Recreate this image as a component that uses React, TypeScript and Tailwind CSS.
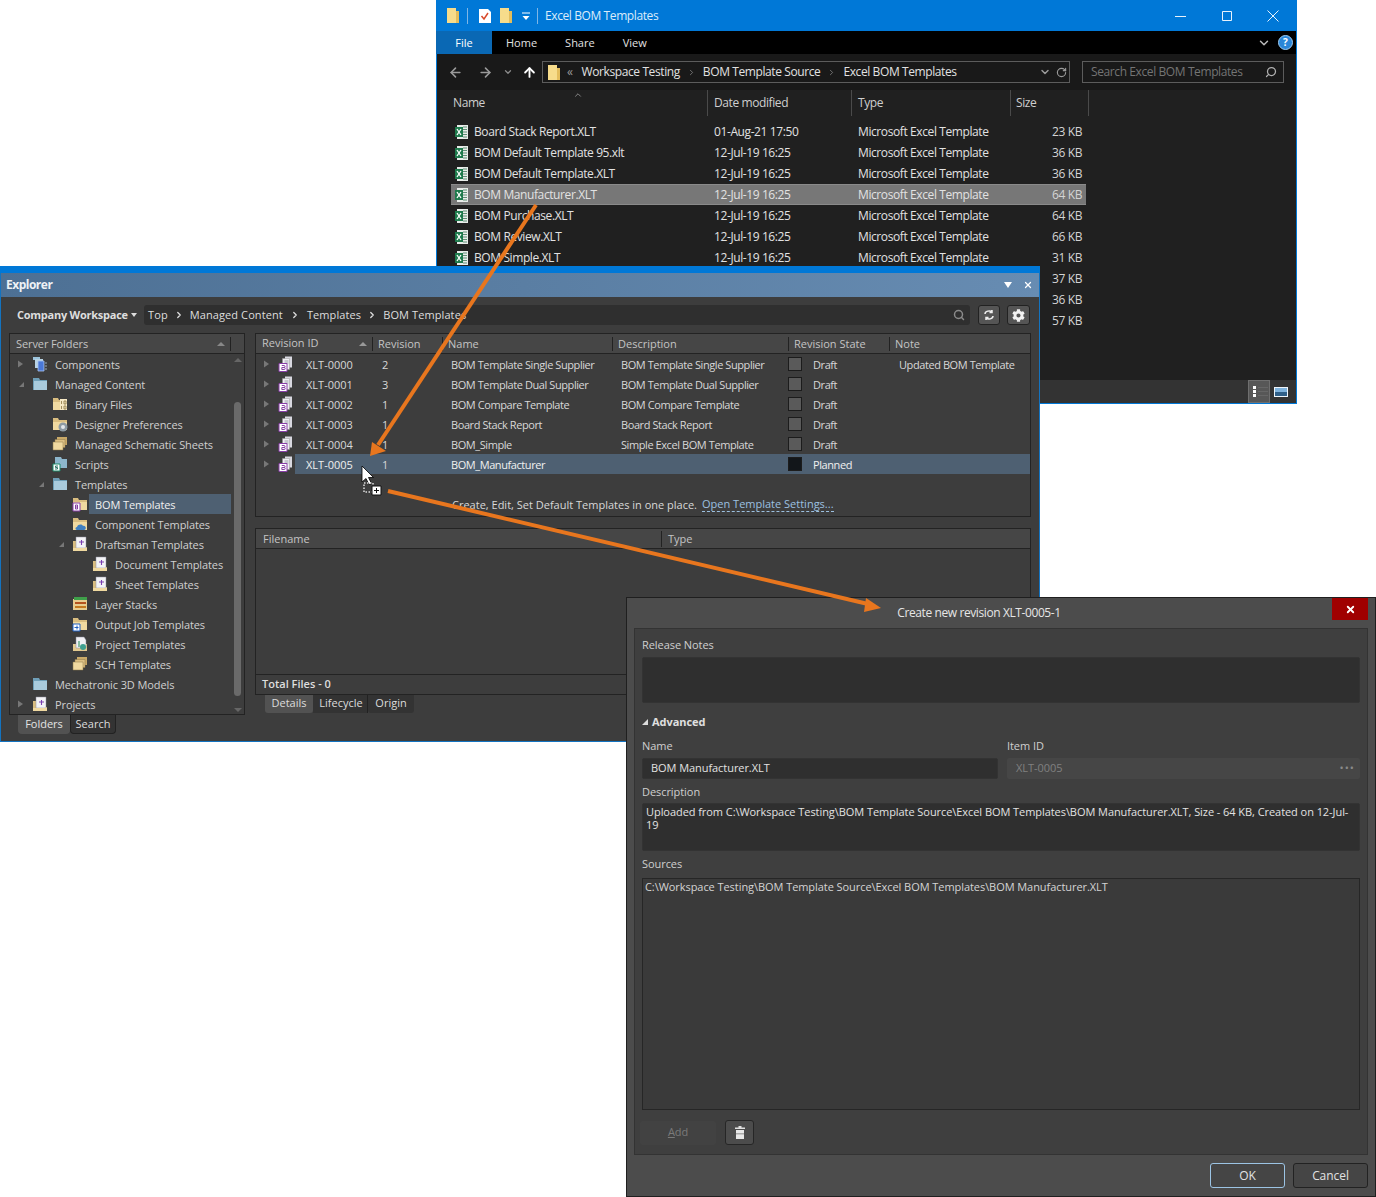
import { ChevronDown, ChevronRight, ArrowLeft, ArrowRight, ArrowUp, RotateCw, Search, X } from "lucide-react";
import { FaCog } from "react-icons/fa";

const files = [
  { name: "Board Stack Report.XLT", date: "01-Aug-21 17:50", size: "23 KB" },
  { name: "BOM Default Template 95.xlt", date: "12-Jul-19 16:25", size: "36 KB" },
  { name: "BOM Default Template.XLT", date: "12-Jul-19 16:25", size: "36 KB" },
  { name: "BOM Manufacturer.XLT", date: "12-Jul-19 16:25", size: "64 KB", selected: true },
  { name: "BOM Purchase.XLT", date: "12-Jul-19 16:25", size: "64 KB" },
  { name: "BOM Review.XLT", date: "12-Jul-19 16:25", size: "66 KB" },
  { name: "BOM Simple.XLT", date: "12-Jul-19 16:25", size: "31 KB" },
  { name: "", date: "", size: "37 KB" },
  { name: "", date: "", size: "36 KB" },
  { name: "", date: "", size: "57 KB" },
];

const tree = [
  { label: "Components", indent: "pl-[6px]", arrow: "right", icon: "components" },
  { label: "Managed Content", indent: "pl-[6px]", arrow: "down", icon: "blue" },
  { label: "Binary Files", indent: "pl-[26px]", icon: "binary" },
  { label: "Designer Preferences", indent: "pl-[26px]", icon: "gear" },
  { label: "Managed Schematic Sheets", indent: "pl-[26px]", icon: "stack" },
  { label: "Scripts", indent: "pl-[26px]", icon: "scripts" },
  { label: "Templates", indent: "pl-[26px]", arrow: "down", icon: "blue" },
  { label: "BOM Templates", indent: "pl-[46px]", icon: "bom", selected: true },
  { label: "Component Templates", indent: "pl-[46px]", icon: "cloud" },
  { label: "Draftsman Templates", indent: "pl-[46px]", arrow: "down", icon: "draft" },
  { label: "Document Templates", indent: "pl-[66px]", icon: "draft" },
  { label: "Sheet Templates", indent: "pl-[66px]", icon: "draft" },
  { label: "Layer Stacks", indent: "pl-[46px]", icon: "layer" },
  { label: "Output Job Templates", indent: "pl-[46px]", icon: "output" },
  { label: "Project Templates", indent: "pl-[46px]", icon: "project" },
  { label: "SCH Templates", indent: "pl-[46px]", icon: "stack" },
  { label: "Mechatronic 3D Models", indent: "pl-[6px]", icon: "blue" },
  { label: "Projects", indent: "pl-[6px]", arrow: "right", icon: "draft" },
];

const revisions = [
  { id: "XLT-0000", rev: "2", name: "BOM Template Single Supplier", desc: "BOM Template Single Supplier", state: "Draft", note: "Updated BOM Template" },
  { id: "XLT-0001", rev: "3", name: "BOM Template Dual Supplier", desc: "BOM Template Dual Supplier", state: "Draft", note: "" },
  { id: "XLT-0002", rev: "1", name: "BOM Compare Template", desc: "BOM Compare Template", state: "Draft", note: "" },
  { id: "XLT-0003", rev: "1", name: "Board Stack Report", desc: "Board Stack Report", state: "Draft", note: "" },
  { id: "XLT-0004", rev: "1", name: "BOM_Simple", desc: "Simple Excel BOM Template", state: "Draft", note: "" },
  { id: "XLT-0005", rev: "1", name: "BOM_Manufacturer", desc: "", state: "Planned", note: "", selected: true },
];

function ExcelIcon() {
  return (
    <svg width="16" height="16" viewBox="0 0 16 16" className="shrink-0">
      <path d="M3 1h11v14H3z" fill="#e8ece9" />
      <path d="M9 3h4M9 5.500h4M9 8h4M9 10.500h4M9 13h4" stroke="#5f8f76" strokeWidth="1" />
      <path d="M1 3h8v10H1z" fill="#1e7a4c" />
      <path d="M3 5l4 6M7 5l-4 6" stroke="#fff" strokeWidth="1.300" />
    </svg>
  );
}

function YellowFolder() {
  return (
    <svg width="14" height="17" viewBox="0 0 14 17" className="shrink-0">
      <path d="M1 1h9v15H1z" fill="#f7dc8b" />
      <path d="M10 4h3v12h-3z" fill="#e4bd5c" />
    </svg>
  );
}

function Tri({ dir }: { dir?: string }) {
  if (dir === "right") {
    return (
      <svg width="16" height="10" viewBox="-1 0 16 10" className="shrink-0">
        <path d="M1 1.500l5 3.500-5 3.500z" fill="#777" />
      </svg>
    );
  }
  if (dir === "down") {
    return (
      <svg width="16" height="10" viewBox="-1 0 16 10" className="shrink-0">
        <path d="M2 8l5-5v5z" fill="#777" />
      </svg>
    );
  }
  return <span className="w-4 shrink-0" />;
}

function TanFolder({ children }: { children?: React.ReactNode }) {
  return (
    <svg width="16" height="16" viewBox="0 0 16 16" className="shrink-0">
      <path d="M1 2h5l1 2h8v10H1z" fill="#d9bd80" />
      <path d="M1 6h14v8H1z" fill="#f0d9a0" />
      {children}
    </svg>
  );
}

function TreeIcon({ kind }: { kind: string }) {
  switch (kind) {
    case "components":
      return (
        <svg width="16" height="16" viewBox="0 0 16 16" className="shrink-0">
          <path d="M1 1h7v3H1z" fill="#9cc4dc" />
          <path d="M3 3h8v9H3z" fill="#b8d3e4" />
          <path d="M6 5h6v10H6z" fill="#4a78d8" stroke="#a8c4f0" strokeWidth="0.800" />
          <path d="M13 7h2M13 10h2M13 13h2" stroke="#9ab" strokeWidth="1" />
        </svg>
      );
    case "blue":
      return (
        <svg width="16" height="16" viewBox="0 0 16 16" className="shrink-0">
          <path d="M1 2h6l1 2h7v10H1z" fill="#6f9fb8" />
          <path d="M2 5h13v9H2z" fill="#a9cbdd" />
        </svg>
      );
    case "binary":
      return (
        <TanFolder>
          <path d="M8 3h7v11H8z" fill="#f6e8c4" />
          <path d="M9.500 5v3M12 5h2v3h-2zM9.500 10v3M12 10h2v3h-2z" stroke="#8a7440" strokeWidth="0.800" fill="none" />
        </TanFolder>
      );
    case "gear":
      return (
        <TanFolder>
          <circle cx="11" cy="11" r="4.500" fill="#8d9aa3" />
          <circle cx="11" cy="11" r="2" fill="#e3e7ea" />
        </TanFolder>
      );
    case "stack":
      return (
        <svg width="16" height="16" viewBox="0 0 16 16" className="shrink-0">
          <path d="M5 1h10v8H5z" fill="#c9a968" />
          <path d="M3 3.500h10v8H3z" fill="#dcbf82" stroke="#8f7a4a" strokeWidth="0.500" />
          <path d="M1 6h10v8H1z" fill="#f0d9a0" stroke="#8f7a4a" strokeWidth="0.500" />
        </svg>
      );
    case "scripts":
      return (
        <svg width="16" height="16" viewBox="0 0 16 16" className="shrink-0">
          <path d="M3 1h6l1 2h5v9H3z" fill="#8db6cc" />
          <path d="M1 8h7v7H1z" fill="#fff" stroke="#1d8a6a" strokeWidth="1" />
          <path d="M6 10H3.500v1.500H5.500V13H3" stroke="#1d6a5a" strokeWidth="0.900" fill="none" />
        </svg>
      );
    case "bom":
      return (
        <TanFolder>
          <path d="M1 7h7v8H1z" fill="#fff" stroke="#8a3fa8" strokeWidth="1" />
          <path d="M3.500 9h2v4h-2zM3.500 11h2" stroke="#7a2f98" strokeWidth="0.900" fill="none" />
        </TanFolder>
      );
    case "cloud":
      return (
        <TanFolder>
          <path d="M5 14c-2 0-2-3 0-3 1-3 5-3 6-1 3-1 4 4 1 4z" fill="#3f7fc0" />
        </TanFolder>
      );
    case "draft":
      return (
        <svg width="16" height="16" viewBox="0 0 16 16" className="shrink-0">
          <path d="M1 5h3v10H1z" fill="#d9bd80" />
          <path d="M4 1h10v11H4z" fill="#f3f3f6" stroke="#8f8f9c" strokeWidth="0.500" />
          <path d="M7 6h5M9.500 4v5" stroke="#7a3fb0" strokeWidth="1.100" />
          <path d="M1 12h12l2-1v4H1z" fill="#f0d9a0" />
        </svg>
      );
    case "layer":
      return (
        <svg width="16" height="16" viewBox="0 0 16 16" className="shrink-0">
          <path d="M1 3h14v11H1z" fill="#e8cd8f" />
          <path d="M2 1h13v3H2z" fill="#3fa04a" />
          <path d="M3 6h11v2H3z" fill="#b4531f" />
          <path d="M3 10h11v2H3z" fill="#c4781f" />
        </svg>
      );
    case "output":
      return (
        <TanFolder>
          <path d="M1 8h7v7H1z" fill="#fff" stroke="#1f5fc0" strokeWidth="1" />
          <path d="M2.500 11.500h4M5 9.500v4" stroke="#1f5fc0" strokeWidth="1" />
        </TanFolder>
      );
    case "project":
      return (
        <svg width="16" height="16" viewBox="0 0 16 16" className="shrink-0">
          <path d="M1 8h14v7H1z" fill="#e3c98f" />
          <path d="M4 1h8l2 3v8H4z" fill="#f0f0f4" stroke="#8a8a98" strokeWidth="0.500" />
          <circle cx="11" cy="11" r="3" fill="#3f9f8f" />
          <path d="M7 5v6" stroke="#6a8" strokeWidth="1.500" />
        </svg>
      );
    default:
      return null;
  }
}

function RevisionIcon() {
  return (
    <svg width="15" height="16" viewBox="0 0 15 16" className="shrink-0">
      <path d="M7 0.500h7v11H7z" fill="#d8d8e0" />
      <path d="M4.500 2.500h7v11h-7z" fill="#f0f0f4" stroke="#999" strokeWidth="0.500" />
      <path d="M6.500 5h4M6.500 7h4" stroke="#8b8b9b" strokeWidth="0.800" />
      <path d="M1 7.500h8v8H1z" fill="#fff" stroke="#8a3fa8" strokeWidth="1" />
      <path d="M3.800 9.500h2.200c1.400 0 1.400 2 0 2h-2.200v2h2.400c1.400 0 1.400-2 0-2" stroke="#7a2f98" strokeWidth="0.900" fill="none" />
    </svg>
  );
}

function FileWindow() {
  return (
    <div className="absolute left-[436px] top-0 w-[861px] h-[404px] flex flex-col border border-[#0078d7] border-t-0 bg-[#202020] text-[#e2e2e2] tracking-[-0.4px]">
      {/* title bar */}
      <div className="h-[31px] -mx-px bg-[#0078d7] flex items-center pl-[10px] shrink-0 text-white">
        <YellowFolder />
        <span className="w-px h-4 bg-[#7fb6e6] ml-[7px]" />
        <svg width="14" height="16" viewBox="0 0 14 16" className="ml-[10px] shrink-0">
          <path d="M1 1h9l3 3v11H1z" fill="#fff" />
          <path d="M3.500 8l2.500 3 4-6" stroke="#d8492a" strokeWidth="1.500" fill="none" />
        </svg>
        <span className="ml-[7px]"><YellowFolder /></span>
        <svg width="10" height="10" viewBox="0 0 10 10" className="ml-[8px] shrink-0">
          <path d="M1 2h8" stroke="#fff" />
          <path d="M1.500 5h7L5 9z" fill="#fff" />
        </svg>
        <span className="w-px h-4 bg-[#7fb6e6] ml-[6px]" />
        <span className="ml-[7px] text-[12px] text-[#dcecfa]">Excel BOM Templates</span>
        <div className="ml-auto flex items-center">
          <svg width="12" height="12" viewBox="0 0 12 12" className="mr-[34px]"><path d="M0 6.500h11" stroke="#e8f2fb" /></svg>
          <svg width="12" height="12" viewBox="0 0 12 12" className="mr-[34px]"><path d="M1.500 1.500h9v9h-9z" stroke="#e8f2fb" fill="none" /></svg>
          <svg width="12" height="12" viewBox="0 0 12 12" className="mr-[18px]"><path d="M0.500 0.500l11 11M11.500 0.500l-11 11" stroke="#e8f2fb" /></svg>
        </div>
      </div>
      {/* ribbon tabs */}
      <div className="h-[23px] bg-black flex items-center shrink-0 text-[11px] tracking-normal">
        <span className="w-[56px] h-full bg-[#0a68b4] flex items-center justify-center text-white -ml-px pt-px">File</span>
        <span className="ml-[14px] pt-px">Home</span>
        <span className="ml-[28px] pt-px">Share</span>
        <span className="ml-[28px] pt-px">View</span>
        <div className="ml-auto flex items-center mr-[3px]">
          <ChevronDown size={14} strokeWidth={2.500} className="text-[#bbb] mr-[7px]" />
          <span className="w-[15px] h-[15px] rounded-full bg-[#2a86d8] border border-[#9dcdf5] flex items-center justify-center text-[10px] font-bold text-white">?</span>
        </div>
      </div>
      {/* address row */}
      <div className="h-[36px] bg-[#191919] flex items-center shrink-0 pl-[11px]">
        <ArrowLeft size={15} strokeWidth={2.500} className="text-[#9a9a9a]" />
        <ArrowRight size={15} strokeWidth={2.500} className="text-[#9a9a9a] ml-[15px]" />
        <ChevronDown size={10} strokeWidth={3} className="text-[#8a8a8a] ml-[10px]" />
        <ArrowUp size={15} strokeWidth={3} className="text-white ml-[9px]" />
        <div className="ml-[5px] w-[528px] h-[22px] border border-[#5c5c5c] flex items-center pl-1 text-[12px]">
          <YellowFolder />
          <span className="ml-[6px] text-[#9a9a9a]">«</span>
          <span className="ml-[9px]">Workspace Testing</span>
          <ChevronRight size={9} className="mx-[7px] text-[#8a8a8a]" />
          <span>BOM Template Source</span>
          <ChevronRight size={9} className="mx-[7px] text-[#8a8a8a]" />
          <span>Excel BOM Templates</span>
          <ChevronDown size={12} strokeWidth={3} className="ml-auto text-[#9a9a9a]" />
          <RotateCw size={11} strokeWidth={2.500} className="ml-[5px] mr-[2px] text-[#9a9a9a]" />
        </div>
        <div className="ml-3 w-[202px] h-[22px] border border-[#5c5c5c] flex items-center pl-2 pr-[6px] text-[12px] text-[#747474]">
          <span>Search Excel BOM Templates</span>
          <Search size={12} className="ml-auto -scale-x-100 text-[#b0b0b0]" strokeWidth={2.500} />
        </div>
      </div>
      {/* column headers */}
      <div className="relative h-[26px] grid grid-cols-[270px_144px_159px_79px] shrink-0 text-[12px] text-[#cfcfcf]">
        <span className="pl-[16px] leading-[26px]">Name</span>
        <span className="border-l border-[#4a4a4a] pl-[6px] leading-[26px]">Date modified</span>
        <span className="border-l border-[#4a4a4a] pl-[6px] leading-[26px]">Type</span>
        <span className="border-x border-[#4a4a4a] pl-[5px] leading-[26px]">Size</span>
        <ChevronDown size={10} className="absolute left-[136px] top-0 rotate-180 text-[#999]" />
      </div>
      {/* file rows */}
      <div className="pl-[14px] pt-[5px] text-[12px]">
        {files.map((f) => (
          <div
            key={f.name + f.size}
            className={`h-[21px] w-[635px] grid grid-cols-[263px_144px_187px_1fr] items-center ${f.selected ? "bg-[#777777] border-y border-[#8a8a8a]" : ""}`}
          >
            <span className="flex items-center pl-[3px]">
              {f.name && <ExcelIcon />}
              <span className="ml-[4px]">{f.name}</span>
            </span>
            <span>{f.date}</span>
            <span>{f.name && "Microsoft Excel Template"}</span>
            <span className="text-right pr-[4px] text-[#d4d4d4]">{f.size}</span>
          </div>
        ))}
      </div>
      {/* status bar */}
      <div className="mt-auto h-[23px] bg-[#333333] flex justify-end items-stretch shrink-0">
        <span className="w-[22px] bg-[#575757] border border-[#6f6f6f] flex flex-col justify-center gap-px pl-[4px]">
          {[0, 1, 2].map((i) => (
            <span key={i} className="flex items-center gap-[2px]">
              <span className="w-[3px] h-[3px] bg-white" />
              <span className="w-[10px] h-px bg-[#666]" />
            </span>
          ))}
        </span>
        <span className="w-[26px] flex items-center pl-[4px]">
          <svg width="14" height="10" viewBox="0 0 14 10">
            <path d="M0 0h14v10H0z" fill="#eef4fa" />
            <path d="M1 1h12v4H1z" fill="#7fb2dc" />
            <path d="M1 5h12v4H1z" fill="#2f5f88" />
          </svg>
        </span>
      </div>
    </div>
  );
}

function TreePanel() {
  return (
    <div className="w-[236px] h-[382px] border border-[#232323] flex flex-col shrink-0">
      <div className="h-[20px] bg-[#464646] border-b border-[#232323] flex items-center pl-[6px] pr-[5px] pt-px shrink-0 text-[#c4c4c4] tracking-[-0.1px]">
        <span>Server Folders</span>
        <svg width="8" height="4" viewBox="0 0 8 4" className="ml-auto"><path d="M0 4l4-4 4 4z" fill="#888" /></svg>
        <span className="w-px h-[14px] bg-[#222] ml-[5px] mr-[8px]" />
      </div>
      <div className="flex flex-1 min-h-0">
        <div className="w-[221px] tracking-[-0.1px]">
          {tree.map((t) => (
            <div key={t.label} className={`h-5 flex items-center ${t.indent}`}>
              <Tri dir={t.arrow} />
              <TreeIcon kind={t.icon} />
              <span className={`flex-1 h-5 ml-[1px] pl-[6px] leading-[22px] ${t.selected ? "bg-[#4e6072] text-[#f0f0f0]" : ""}`}>{t.label}</span>
            </div>
          ))}
        </div>
        <div className="w-[13px] flex flex-col items-center pt-[4px] pb-[2px]">
          <svg width="8" height="4" viewBox="0 0 8 4"><path d="M0 4l4-4 4 4z" fill="#666" /></svg>
          <div className="w-[7px] h-[294px] mt-[40px] rounded-full bg-[#6a6a6a]" />
          <svg width="8" height="4" viewBox="0 0 8 4" className="mt-auto"><path d="M0 0l4 4 4-4z" fill="#666" /></svg>
        </div>
      </div>
    </div>
  );
}

function RevisionGrid() {
  const head = "border-l border-[#222] pl-[5px] h-[14px] leading-[14px]";
  return (
    <div className="h-[184px] border border-[#232323] flex flex-col">
      <div className="h-[20px] bg-[#464646] border-b border-[#232323] grid grid-cols-[116px_70px_170px_176px_101px_1fr] items-center shrink-0 text-[#c4c4c4]">
        <span className="flex items-center pl-[6px] pr-[5px]">
          Revision ID
          <svg width="8" height="4" viewBox="0 0 8 4" className="ml-auto"><path d="M0 4l4-4 4 4z" fill="#999" /></svg>
        </span>
        <span className={head}>Revision</span>
        <span className={head}>Name</span>
        <span className={head}>Description</span>
        <span className={head}>Revision State</span>
        <span className={head}>Note</span>
      </div>
      {revisions.map((r) => (
        <div
          key={r.id}
          className="h-5 grid grid-cols-[116px_70px_170px_176px_101px_1fr] items-center tracking-[-0.42px] text-[#d8d8d8]"
        >
          <span className="flex items-center h-5">
            <span className="ml-[6px]"><Tri dir="right" /></span>
            <RevisionIcon />
            <span className={`flex-1 h-5 ml-[2px] pl-[11px] leading-[22px] tracking-normal ${r.selected ? "bg-[#4e6072] text-[#f0f0f0]" : ""}`}>{r.id}</span>
          </span>
          <span className={`h-5 pl-[10px] leading-[22px] ${r.selected ? "bg-[#4e6072]" : ""}`}>{r.rev}</span>
          <span className={`h-5 pl-[9px] leading-[22px] ${r.selected ? "bg-[#4e6072] text-[#f0f0f0]" : ""}`}>{r.name}</span>
          <span className={`pl-[9px] leading-[22px] h-5 ${r.selected ? "bg-[#4e6072]" : ""}`}>{r.desc}</span>
          <span className={`flex items-center h-5 ${r.selected ? "bg-[#4e6072] text-[#f0f0f0]" : ""}`}>
            <span className={`w-[14px] h-[14px] border border-[#1c1c1c] ${r.state === "Planned" ? "bg-[#12161a]" : "bg-[#5a5a5a]"}`} />
            <span className="ml-[11px] pt-[2px] leading-[18px]">{r.state}</span>
          </span>
          <span className={`pl-[10px] leading-[22px] h-5 ${r.selected ? "bg-[#4e6072]" : ""}`}>{r.note}</span>
        </div>
      ))}
      <div className="mt-[23px] flex pl-[196px] text-[#d8d8d8]">
        <span>Create, Edit, Set Default Templates in one place.</span>
        <span className="ml-[5px] text-[#9cc0e0] border-b border-dashed border-[#9cc0e0] leading-[14px] h-[15px]">Open Template Settings...</span>
      </div>
    </div>
  );
}

function AltiumPanel() {
  return (
    <div className="absolute left-0 top-[266px] w-[1040px] h-[476px] flex flex-col border border-[#1373c0] border-t-0 bg-[#3d3d3d] text-[11px] text-[#d0d0d0]">
      <div className="h-[7px] -mx-px bg-[#0078d7] shrink-0" />
      <div className="h-[24px] bg-gradient-to-r from-[#4d7094] to-[#678cb2] flex items-center pl-[5px] pr-[5px] shrink-0 text-[12px] font-bold tracking-[-0.5px] text-[#eef2f6]">
        <span>Explorer</span>
        <svg width="8" height="6" viewBox="0 0 8 6" className="ml-auto"><path d="M0 0h8L4 6z" fill="#fff" /></svg>
        <X size={10} strokeWidth={3} className="ml-[11px] mr-[1px] text-white" />
      </div>
      <div className="flex items-center pl-[16px] pt-[8px] shrink-0">
        <span className="w-[127px] flex items-center shrink-0">
          <span className="font-bold text-[#dedede] whitespace-nowrap tracking-[-0.25px]">Company Workspace</span>
          <svg width="6" height="4" viewBox="0 0 6 4" className="ml-[3px]"><path d="M0 0h6L3 4z" fill="#ddd" /></svg>
        </span>
        <div className="w-[826px] h-[20px] rounded-[3px] bg-[#2f2f2f] flex items-center pl-[4px] pr-[5px] text-[#dedede] tracking-[0.1px]">
          <span>Top</span>
          <ChevronRight size={10} strokeWidth={3} className="mx-[6px]" />
          <span>Managed Content</span>
          <ChevronRight size={10} strokeWidth={3} className="mx-[7px]" />
          <span>Templates</span>
          <ChevronRight size={10} strokeWidth={3} className="mx-[6px]" />
          <span>BOM Templates</span>
          <Search size={12} strokeWidth={3} className="ml-auto text-[#8a8a8a]" />
        </div>
        <span className="ml-[8px] w-[22px] h-[20px] rounded-[3px] border border-[#222] bg-[#555] flex items-center justify-center">
          <svg width="12" height="12" viewBox="0 0 12 12" fill="none" stroke="#eee" strokeWidth="1.500">
            <path d="M2 5c0-3 5-4 7-2M9 1v2.500H6.500" />
            <path d="M10 7c0 3-5 4-7 2M3 11V8.500h2.500" />
          </svg>
        </span>
        <span className="ml-[7px] w-[23px] h-[20px] rounded-[3px] border border-[#222] bg-[#555] flex items-center justify-center">
          <FaCog size={13} className="text-[#f2f2f2]" />
        </span>
      </div>
      <div className="flex pl-[8px] pt-[8px] flex-1 min-h-0">
        <div className="flex flex-col">
          <TreePanel />
          <div className="flex pl-[9px]">
            <span className="w-[52px] h-[19px] bg-[#525252] rounded-b-[4px] flex items-center justify-center text-[#e4e4e4]">Folders</span>
            <span className="w-[46px] h-[19px] bg-[#333] border border-t-0 border-[#222] rounded-b-[4px] flex items-center justify-center text-[#dcdcdc]">Search</span>
          </div>
        </div>
        <div className="ml-[10px] w-[776px] flex flex-col">
          <RevisionGrid />
          <div className="mt-[11px] h-[166px] border border-[#232323] border-b-0 flex flex-col">
            <div className="h-[20px] bg-[#464646] border-b border-[#232323] flex items-center pt-px shrink-0 text-[#c4c4c4]">
              <span className="w-[405px] pl-[7px]">Filename</span>
              <span className="border-l border-[#222] pl-[6px]">Type</span>
            </div>
            <div className="mt-auto h-[20px] border-t border-[#232323] flex items-center pl-[6px]">
              <span className="font-semibold text-[#dedede]">Total Files - 0</span>
            </div>
          </div>
          <div className="flex pl-[10px] border-t border-[#232323] text-[#dcdcdc]">
            <span className="w-[48px] h-[18px] pb-[2px] bg-[#525252] rounded-b-[3px] flex items-center justify-center">Details</span>
            <span className="w-[55px] h-[18px] pb-[2px] pl-[2px] bg-[#333] border-r border-[#222] flex items-center justify-center">Lifecycle</span>
            <span className="w-[46px] h-[18px] pb-[2px] bg-[#333] rounded-b-[3px] flex items-center justify-center">Origin</span>
          </div>
        </div>
      </div>
    </div>
  );
}

function Dialog() {
  const box = "bg-[#2f2f2f] border border-[#333] rounded-[2px]";
  return (
    <div className="absolute left-[626px] top-[597px] w-[750px] h-[600px] bg-[#4c4c4c] border border-[#1f1f1f] flex flex-col text-[11px] tracking-[-0.06px] text-[#cfcfcf]">
      <div className="relative h-[30px] flex items-center justify-center pr-[44px] shrink-0 text-[12px] text-[#e6e6e6] tracking-[-0.4px]">
        <span>Create new revision XLT-0005-1</span>
        <span className="absolute right-[7px] top-0 w-[36px] h-[22px] bg-[#a00000] flex items-center justify-center">
          <X size={11} strokeWidth={4} className="text-white" />
        </span>
      </div>
      <div className="mx-[7px] h-[527px] bg-[#3f3f3f] border border-[#333] px-[7px] flex flex-col shrink-0">
        <div className="mt-[9px] h-[14px] leading-[14px]">Release Notes</div>
        <div className={`mt-[5px] h-[46px] ${box}`} />
        <div className="mt-[12px] flex items-center h-[14px] font-bold text-[#e0e0e0]">
          <svg width="6" height="6" viewBox="0 0 6 6" className="mr-[4px]"><path d="M0 6l6-6v6z" fill="#ddd" /></svg>
          Advanced
        </div>
        <div className="mt-[10px] grid grid-cols-[356px_1fr] gap-x-[9px]">
          <div>
            <div className="h-[14px] leading-[14px]">Name</div>
            <div className={`mt-[5px] h-[21px] flex items-center pl-[8px] text-[#e2e2e2] ${box}`}>BOM Manufacturer.XLT</div>
          </div>
          <div>
            <div className="h-[14px] leading-[14px]">Item ID</div>
            <div className="mt-[5px] h-[21px] flex items-center pl-[9px] pr-[5px] bg-[#464646] rounded-[2px] text-[#808080]">
              XLT-0005
              <span className="ml-auto tracking-[1px] text-[#8a8a8a]">•••</span>
            </div>
          </div>
        </div>
        <div className="mt-[6px] h-[14px] leading-[14px]">Description</div>
        <div className={`mt-[4px] h-[48px] px-[3px] py-[1px] leading-[13px] text-[#e2e2e2] ${box}`}>
          Uploaded from C:\Workspace Testing\BOM Template Source\Excel BOM Templates\BOM Manufacturer.XLT, Size - 64 KB, Created on 12-Jul-19
        </div>
        <div className="mt-[6px] h-[14px] leading-[14px]">Sources</div>
        <div className="mt-[7px] h-[232px] bg-[#3a3a3a] border border-[#262626] px-[2px] text-[#d4d4d4]">
          C:\Workspace Testing\BOM Template Source\Excel BOM Templates\BOM Manufacturer.XLT
        </div>
        <div className="mt-[10px] flex items-center">
          <span className="-ml-[2px] w-[76px] h-[24px] bg-[#424242] rounded-[2px] flex items-center justify-center text-[#7a7a7a]"><span><u>A</u>dd</span></span>
          <span className="ml-[9px] w-[29px] h-[25px] bg-[#4c4c4c] border border-[#262626] rounded-[3px] flex items-center justify-center">
            <svg width="10" height="13" viewBox="0 0 10 13">
              <path d="M3.500 0h3v1.500H10V3H0V1.500h3.500z" fill="#e0e0e0" />
              <path d="M1 4h8v9H1z" fill="#e8e8e8" />
              <path d="M1 7h8v1.500H1z" fill="#aaa" />
            </svg>
          </span>
        </div>
      </div>
      <div className="flex justify-end gap-2 pt-[8px] pr-[7px] text-[#e2e2e2] text-[12px]">
        <span className="w-[75px] h-[25px] rounded-[3px] border border-[#9cc4e4] bg-[#454545] flex items-center justify-center">OK</span>
        <span className="w-[75px] h-[25px] rounded-[3px] border border-[#222] bg-[#454545] flex items-center justify-center">Cancel</span>
      </div>
    </div>
  );
}

export default function App() {
  return (
    <div className="relative w-[1376px] h-[1197px] overflow-hidden bg-white font-['Open_Sans',sans-serif]">
      <FileWindow />
      <AltiumPanel />
      <Dialog />
      {/* callout arrows and drag cursor */}
      <svg width="1376" height="1197" viewBox="0 0 1376 1197" className="absolute inset-0 pointer-events-none">
        <path d="M536 205L378 445" stroke="#e8761e" strokeWidth="4" />
        <path d="M370 456L372 442L386 451z" fill="#e8761e" />
        <path d="M388 491L868 604" stroke="#e8761e" strokeWidth="4" />
        <path d="M881 608L866 598L864 612z" fill="#e8761e" />
        <path d="M362 466v16l4-3.500 3 6 2.500-1-3-6h5z" fill="#fff" stroke="#000" strokeWidth="0.800" />
        <path d="M364 483h9v9h-9z" fill="none" stroke="#ddd" strokeWidth="1.500" strokeDasharray="1.500 1.500" />
        <path d="M372 486h9v9h-9z" fill="#fff" stroke="#111" />
        <path d="M374 490.500h5M376.500 488v5" stroke="#111" />
      </svg>
    </div>
  );
}
